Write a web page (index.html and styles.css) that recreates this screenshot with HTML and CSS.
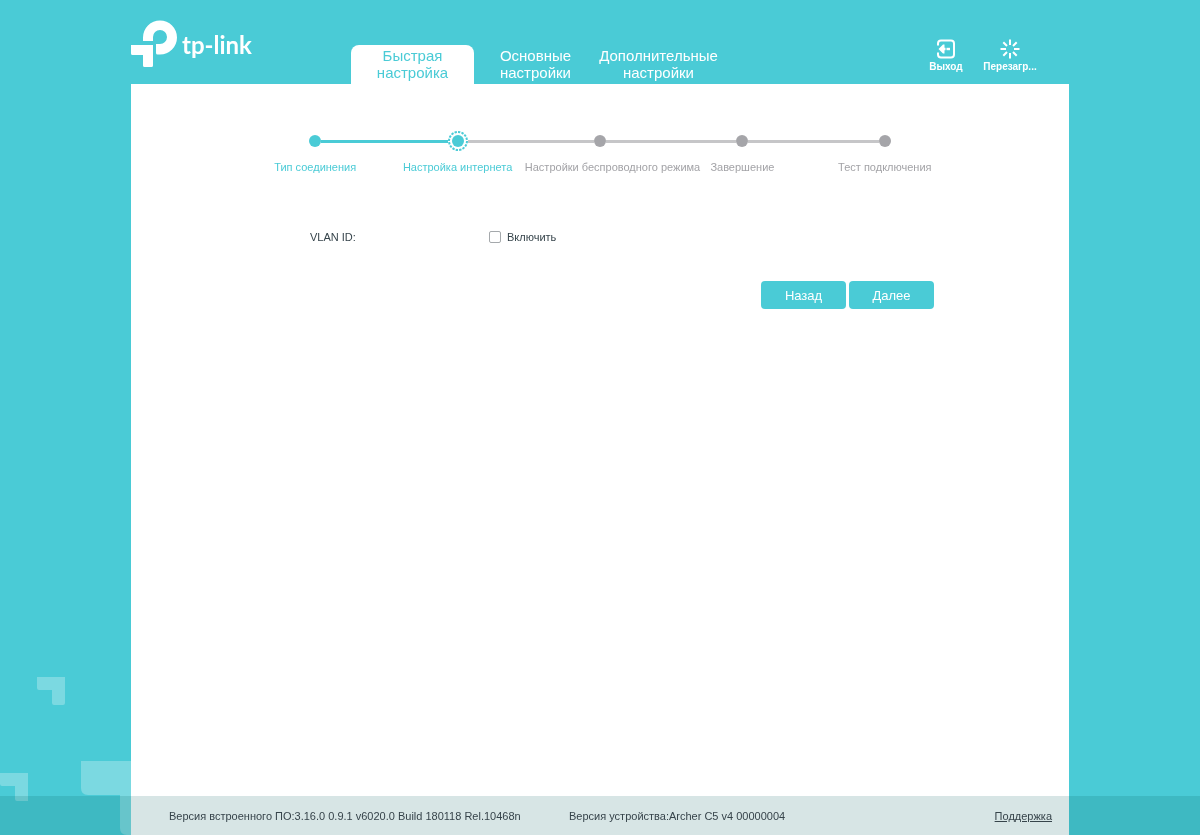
FILE: index.html
```html
<!DOCTYPE html>
<html lang="ru">
<head>
<meta charset="utf-8">
<meta name="viewport" content="width=device-width, initial-scale=1">
<title>tp-link</title>
<link rel="stylesheet" href="styles.css">
</head>
<body>
<svg class="decor" width="160" height="160" viewBox="0 0 160 160" aria-hidden="true">
  <path d="M37 2h28v26q0 2-2 2H54q-2 0-2-2V15H39q-2 0-2-2z"/>
  <path d="M0 98h28v28H17q-2 0-2-2V111H2q-2 0-2-2z"/>
  <path d="M81 86h79v74h-33q-7 0-7-7V120H88q-7 0-7-7z"/>
</svg>
<div class="page">
  <header class="header">
    <a class="logo" href="#">
      <svg width="46" height="48" viewBox="0 0 46 48" aria-hidden="true">
        <path d="M12 21V17.500A17 17 0 1 1 29 34.500H26.500Q25 34.500 25 33V24H29A7 7 0 1 0 22 17V21z"/>
        <path d="M0 25H22V45.500Q22 47 20.500 47H13.500Q12 47 12 45.500V35H1.500Q0 35 0 33.500z"/>
      </svg>
      <span class="wordmark">tp-link</span>
    </a>
    <nav class="tabs">
      <a class="tab tab-active" href="#">Быстрая настройка</a>
      <a class="tab" href="#">Основные настройки</a>
      <a class="tab" href="#">Дополнительные настройки</a>
    </nav>
    <div class="tools">
      <button class="tool" type="button">
        <svg width="20" height="20" viewBox="0 0 20 20" aria-hidden="true">
          <path class="stroke" d="M2 6.500V4.500Q2 1.500 5 1.500H15Q18 1.500 18 4.500V15.500Q18 18.500 15 18.500H5Q2 18.500 2 15.500V13.500"/>
          <path class="fill" d="M2.500 10L7 5.500H8.500V8.800H9.500V11.200H8.500V14.500H7z"/>
          <path class="fill" d="M10.500 8.800h3.500v2.400h-3.500z"/>
        </svg>
        <span>Выход</span>
      </button>
      <button class="tool" type="button">
        <svg width="20" height="20" viewBox="0 0 20 20" aria-hidden="true">
          <path class="stroke" d="M10 0.500V6M10 14V19.500M0.500 10H6M14 10H19.500M3.300 3.300L7 7M13 13L16.700 16.700M16.700 3.300L13 7M7 13L3.300 16.700"/>
        </svg>
        <span>Перезагр...</span>
      </button>
    </div>
  </header>
  <main class="content">
    <ol class="steps">
      <li class="step done"><div class="marker"><i class="line none"></i><i class="dot"></i><i class="line"></i></div><span class="step-label">Тип соединения</span></li>
      <li class="step current"><div class="marker"><i class="line"></i>
        <svg width="20" height="20" viewBox="0 0 20 20" aria-hidden="true"><circle class="ring" cx="10" cy="10" r="9" pathLength="48"/><circle class="core" cx="10" cy="10" r="6"/></svg>
        <i class="line next"></i></div><span class="step-label">Настройка интернета</span></li>
      <li class="step"><div class="marker"><i class="line"></i><i class="dot"></i><i class="line"></i></div><span class="step-label">Настройки беспроводного режима</span></li>
      <li class="step"><div class="marker"><i class="line"></i><i class="dot"></i><i class="line"></i></div><span class="step-label">Завершение</span></li>
      <li class="step"><div class="marker"><i class="line"></i><i class="dot"></i><i class="line none"></i></div><span class="step-label">Тест подключения</span></li>
    </ol>
    <form class="form">
      <div class="row">
        <span id="vlan">VLAN ID:</span>
        <label class="check"><input type="checkbox" aria-describedby="vlan"><span>Включить</span></label>
      </div>
      <div class="actions">
        <button class="btn" type="button">Назад</button>
        <button class="btn" type="button">Далее</button>
      </div>
    </form>
  </main>
</div>
<footer class="footer">
  <span class="firmware">Версия встроенного ПО:3.16.0 0.9.1 v6020.0 Build 180118 Rel.10468n</span>
  <span class="hardware">Версия устройства:Archer C5 v4 00000004</span>
  <a class="support" href="#">Поддержка</a>
</footer>
</body>
</html>
```
FILE: styles.css
```css
* { box-sizing: border-box; }
body {
  margin: 0;
  background: #4acbd6;
  color: #36444b;
  font: 11px/16px "Liberation Sans", Arial, sans-serif;
}
button { font-family: inherit; border: 0; cursor: pointer; }
.decor { position: fixed; left: 0; bottom: 0; fill: rgba(255, 255, 255, 0.27); }
.page {
  position: relative;
  display: flex;
  flex-direction: column;
  min-height: 100vh;
  padding: 0 131px;
}
.header { display: flex; align-items: flex-end; height: 84px; }
.logo {
  display: flex;
  align-items: center;
  gap: 5px;
  align-self: flex-start;
  flex: 0 0 220px;
  padding-top: 20px;
  color: #fff;
  text-decoration: none;
}
.logo svg { fill: #fff; }
.wordmark { padding-top: 2px; font: bold 24px/28px Lato, sans-serif; }
.tabs { display: flex; }
.tab {
  width: 123px;
  height: 39px;
  padding: 2px 0;
  border-radius: 8px 8px 0 0;
  color: #fff;
  font-size: 15px;
  line-height: 17px;
  text-align: center;
  text-decoration: none;
}
.tab-active { background: #fff; color: #4acbd6; }
.tools { display: flex; margin-left: auto; padding: 0 27px 10px 0; }
.tool {
  display: flex;
  flex-direction: column;
  align-items: center;
  gap: 1px;
  width: 64px;
  padding: 0;
  background: none;
  color: #fff;
  font-size: 10px;
  font-weight: bold;
  line-height: 14px;
}
.stroke { fill: none; stroke: #fff; stroke-width: 2; }
.fill { fill: #fff; }
.content { flex: 1; padding-top: 47px; background: #fff; }
.steps {
  display: grid;
  grid-template-columns: repeat(5, minmax(0, 1fr));
  margin: 0;
  padding: 0 113px;
  list-style: none;
}
.step { color: #a3a3a7; text-align: center; }
.done, .current { color: #4acbd6; }
.marker { display: flex; align-items: center; height: 20px; margin-bottom: 8px; }
.line { flex: 1; height: 3px; background: #c6c6c8; }
.done .line, .current .line { background: #4acbd6; }
.step .next { background: #c6c6c8; }
.step .none { background: none; }
.dot { width: 12px; height: 12px; border-radius: 50%; background: #a5a5a9; }
.done .dot { background: #4acbd6; }
.ring { fill: none; stroke: #4acbd6; stroke-width: 2; stroke-dasharray: 2 1; }
.core { fill: #4acbd6; }
.step-label { display: block; margin: 0 -4px; white-space: nowrap; }
.form { padding: 54px 135px 0 179px; }
.row { display: grid; grid-template-columns: 179px 1fr; align-items: center; }
.check { display: flex; align-items: center; gap: 6px; }
.check input {
  appearance: none;
  width: 12px;
  height: 12px;
  margin: 0;
  border: 1px solid #a5a9ac;
  border-radius: 2px;
  background: #fff;
}
.check input:checked { background: #4acbd6; }
.actions { display: flex; justify-content: flex-end; gap: 3px; padding-top: 36px; }
.btn {
  width: 85px;
  height: 28px;
  padding: 0;
  border-radius: 4px;
  background: #4acbd6;
  color: #fff;
  font-size: 13px;
}
.footer {
  position: fixed;
  right: 0;
  bottom: 0;
  left: 0;
  display: flex;
  align-items: center;
  height: 39px;
  padding: 0 148px 0 169px;
  background: rgba(0, 88, 88, 0.155);
}
.firmware { flex: 0 0 400px; }
.support { margin-left: auto; color: inherit; }
```
